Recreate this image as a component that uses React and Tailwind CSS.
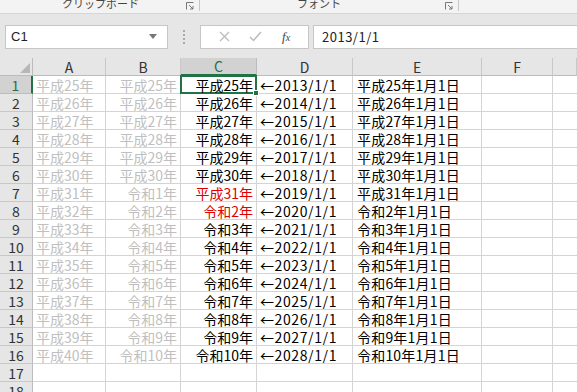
const cols = ["A", "B", "C", "D", "E", "F", ""];

const rows = [
  ["平成25年", "平成25年", "平成25年", "2013", "平成25年1月1日"],
  ["平成26年", "平成26年", "平成26年", "2014", "平成26年1月1日"],
  ["平成27年", "平成27年", "平成27年", "2015", "平成27年1月1日"],
  ["平成28年", "平成28年", "平成28年", "2016", "平成28年1月1日"],
  ["平成29年", "平成29年", "平成29年", "2017", "平成29年1月1日"],
  ["平成30年", "平成30年", "平成30年", "2018", "平成30年1月1日"],
  ["平成31年", "令和1年", "平成31年", "2019", "平成31年1月1日"],
  ["平成32年", "令和2年", "令和2年", "2020", "令和2年1月1日"],
  ["平成33年", "令和3年", "令和3年", "2021", "令和3年1月1日"],
  ["平成34年", "令和4年", "令和4年", "2022", "令和4年1月1日"],
  ["平成35年", "令和5年", "令和5年", "2023", "令和5年1月1日"],
  ["平成36年", "令和6年", "令和6年", "2024", "令和6年1月1日"],
  ["平成37年", "令和7年", "令和7年", "2025", "令和7年1月1日"],
  ["平成38年", "令和8年", "令和8年", "2026", "令和8年1月1日"],
  ["平成39年", "令和9年", "令和9年", "2027", "令和9年1月1日"],
  ["平成40年", "令和10年", "令和10年", "2028", "令和10年1月1日"],
  ["", "", "", "", ""],
  ["", "", "", "", ""],
];

const font = { fontFamily: '"Noto Sans CJK JP", "Liberation Sans", sans-serif' };

function Launcher() {
  return (
    <svg width="8" height="8" viewBox="0 0 8 8" className="text-[#777]">
      <path d="M0.5 7.5V0.5H7.5" fill="none" stroke="currentColor" strokeWidth="1" />
      <path d="M3 3L7 7M7 4V7H4" fill="none" stroke="currentColor" strokeWidth="1" />
    </svg>
  );
}

function Cell({ children, className = "" }) {
  return (
    <div
      className={`h-[18px] border-r border-b border-[#d4d4d4] flex items-center overflow-hidden whitespace-nowrap px-[3px] text-[14px] leading-[16px] ${className}`}
    >
      {children}
    </div>
  );
}

export default function App() {
  return (
    <div className="w-[577px] h-[392px] overflow-hidden bg-white text-black" style={font}>
      {/* ribbon group labels */}
      <div className="h-[14px] bg-[#f3f3f3] border-b border-[#d5d5d5] flex text-[11px] text-[#444] leading-none">
        <div className="w-[200px] flex items-start relative border-r border-[#c6c6c6] h-[11px]">
          <span className="flex-1 text-center -mt-[2px] pl-[2px]">クリップボード</span>
          <div className="absolute right-[5px] top-[2px]"><Launcher /></div>
        </div>
        <div className="w-[259px] flex items-start relative border-r border-[#c6c6c6] h-[11px]">
          <span className="flex-1 text-center -mt-[2px] pr-[20px]">フォント</span>
          <div className="absolute right-[5px] top-[2px]"><Launcher /></div>
        </div>
      </div>

      {/* formula bar */}
      <div className="h-[44px] bg-[#e6e6e6] flex items-center pt-[1px] pl-[5px]">
        <div className="w-[163px] h-[24px] bg-white border border-[#c6c6c6] flex items-center justify-between px-[5px] text-[13px] text-[#222]">
          <span style={{ fontFamily: '"Liberation Sans", sans-serif' }}>C1</span>
          <svg width="8" height="5" viewBox="0 0 8 5" className="mr-[5px]">
            <path d="M0 0H8L4 5Z" fill="#777" />
          </svg>
        </div>
        <div className="w-[32px] flex flex-col items-center gap-[2px]">
          <div className="w-[2px] h-[2px] bg-[#aaa]" />
          <div className="w-[2px] h-[2px] bg-[#aaa]" />
          <div className="w-[2px] h-[2px] bg-[#aaa]" />
          <div className="w-[2px] h-[2px] bg-[#aaa]" />
        </div>
        <div className="w-[109px] h-[24px] bg-white border border-[#c6c6c6] flex items-center justify-around px-[8px] mr-[4px]">
          <svg width="11" height="11" viewBox="0 0 11 11">
            <path d="M1 1L10 10M10 1L1 10" stroke="#bbb" strokeWidth="1.3" />
          </svg>
          <svg width="13" height="11" viewBox="0 0 13 11">
            <path d="M1 6L4.5 9.5L12 1" fill="none" stroke="#bbb" strokeWidth="1.5" />
          </svg>
          <span className="italic text-[13px] text-[#444]" style={{ fontFamily: '"Liberation Serif", serif' }}>
            f<span className="text-[10px]">x</span>
          </span>
        </div>
        <div className="flex-1 h-[24px] bg-white border border-[#c6c6c6] border-r-0 flex items-center pl-[8px] text-[13px] text-[#222] tracking-[0.5px]">
          2013/1/1
        </div>
      </div>

      {/* sheet */}
      <div className="grid grid-cols-[33px_73px_75px_76px_96px_129px_71px_1fr] auto-rows-[18px] bg-white">
        {/* corner */}
        <div className="h-[18px] bg-[#e6e6e6] border-r border-b border-[#bcbcbc] flex items-end justify-end p-[2px]">
          <svg width="10" height="10" viewBox="0 0 10 10">
            <path d="M10 0V10H0Z" fill="#b7b7b7" />
          </svg>
        </div>
        {cols.map((c, i) => (
          <div
            key={i}
            className={
              c === "C"
                ? "h-[18px] bg-[#d2d2d2] border-r border-[#bcbcbc] border-b-2 border-b-[#217346] flex items-center justify-center text-[14px] text-[#217346] leading-[16px]"
                : "h-[18px] bg-[#e6e6e6] border-r border-[#c8c8c8] border-b border-b-[#bcbcbc] flex items-center justify-center text-[14px] text-[#333] leading-[16px]"
            }
          >
            {c}
          </div>
        ))}

        {rows.map((r, i) => {
          const red = i === 6 || i === 7;
          return [
            <div
              key={`h${i}`}
              className={
                i === 0
                  ? "h-[18px] bg-[#d2d2d2] border-r-2 border-r-[#217346] border-b border-[#bcbcbc] flex items-center justify-center text-[14px] text-[#217346] leading-[16px]"
                  : "h-[18px] bg-[#e6e6e6] border-r border-[#bcbcbc] border-b border-b-[#c8c8c8] flex items-center justify-center text-[14px] text-[#333] leading-[16px]"
              }
            >
              {i + 1}
            </div>,
            <Cell key={`a${i}`} className="text-[#bfbfbf]">{r[0]}</Cell>,
            <Cell key={`b${i}`} className="justify-end text-[#bfbfbf]">{r[1]}</Cell>,
            i === 0 ? (
              <div
                key={`c${i}`}
                className="relative border-2 border-[#217346] -ml-[1px] -mt-[1px] h-[19px] w-[77px] flex items-center justify-end pr-[2px] text-[14px] leading-[16px] whitespace-nowrap"
              >
                {r[2]}
                <div className="absolute -right-[4px] -bottom-[4px] w-[6px] h-[6px] bg-[#217346] border border-white" />
              </div>
            ) : (
              <Cell key={`c${i}`} className={`justify-end ${red ? "text-[#e00000]" : ""}`}>{r[2]}</Cell>
            ),
            <Cell key={`d${i}`} className="tracking-[0.6px]">{r[3] ? `←${r[3]}/1/1` : ""}</Cell>,
            <Cell key={`e${i}`} className="pl-[4px] tracking-[0.2px]">{r[4]}</Cell>,
            <Cell key={`f${i}`} />,
            <Cell key={`g${i}`} className="border-r-0" />,
          ];
        })}
      </div>
    </div>
  );
}
